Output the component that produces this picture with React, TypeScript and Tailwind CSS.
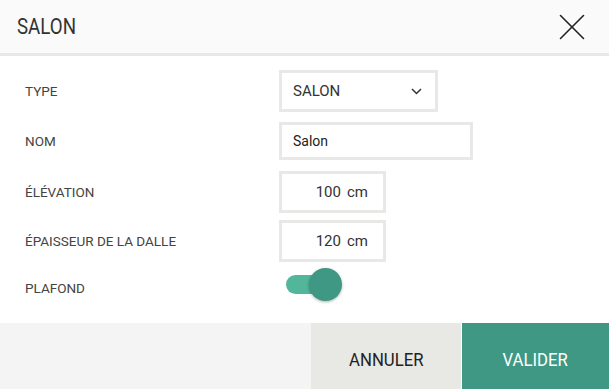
import { useState } from "react";

const font = { fontFamily: "Roboto, 'Noto Sans', sans-serif" };

function Label({ children }: { children: string }) {
  return <div className="w-[279px] shrink-0 pl-[25px] text-[13.5px] text-[#444]">{children}</div>;
}

export default function App() {
  const [plafond, setPlafond] = useState(true);

  return (
    <div className="flex h-[389px] w-[609px] flex-col overflow-hidden bg-white" style={font}>
      {/* Header */}
      <div className="flex h-[56px] items-center justify-between border-b-[3px] border-[#e8e8e8] bg-[#fafafa] pl-[17px] pr-[24px]">
        <span className="inline-block origin-left scale-x-[0.85] text-[22px] leading-none text-[#333]">SALON</span>
        <svg width="26" height="26" viewBox="0 0 26 26" fill="none" stroke="#222" strokeWidth="1.6" strokeLinecap="round">
          <line x1="1.5" y1="1.5" x2="24.5" y2="24.5" />
          <line x1="24.5" y1="1.5" x2="1.5" y2="24.5" />
        </svg>
      </div>

      {/* Form */}
      <div className="flex flex-1 flex-col pt-[14px]">
        <div className="flex h-[42px] items-center">
          <Label>TYPE</Label>
          <div className="flex h-[42px] w-[159px] items-center justify-between border-[3px] border-[#e8e8e6] bg-white pl-[11px] pr-[13px]">
            <span className="text-[15px] text-[#333]">SALON</span>
            <svg width="11" height="7" viewBox="0 0 11 7" fill="none" stroke="#333" strokeWidth="1.5">
              <polyline points="1,1 5.5,5.5 10,1" />
            </svg>
          </div>
        </div>

        <div className="mt-[10px] flex h-[38px] items-center">
          <Label>NOM</Label>
          <div className="flex h-[38px] w-[194px] items-center border-[3px] border-[#e8e8e6] bg-white pl-[11px]">
            <span className="text-[14px] text-[#222]">Salon</span>
          </div>
        </div>

        <div className="mt-[11px] flex h-[42px] items-center">
          <Label>ÉLÉVATION</Label>
          <div className="flex h-[42px] w-[107px] items-center justify-end gap-[6px] border-[3px] border-[#e8e8e6] bg-white pr-[15px] text-[15px] text-[#333]">
            <span>100</span>
            <span>cm</span>
          </div>
        </div>

        <div className="mt-[7px] flex h-[42px] items-center">
          <Label>ÉPAISSEUR DE LA DALLE</Label>
          <div className="flex h-[42px] w-[107px] items-center justify-end gap-[6px] border-[3px] border-[#e8e8e6] bg-white pr-[15px] text-[15px] text-[#333]">
            <span>120</span>
            <span>cm</span>
          </div>
        </div>

        <div className="mt-[6px] flex h-[33px] items-center">
          <div className="w-[279px] shrink-0 pl-[25px] pt-[8px] text-[13.5px] text-[#444]">PLAFOND</div>
          <button
            onClick={() => setPlafond((v) => !v)}
            className="relative ml-[7px] h-[33px] w-[56px]"
            aria-pressed={plafond}
          >
            <span className="absolute left-0 top-[7px] h-[19px] w-[44px] rounded-full bg-[#52b69b]" />
            <span
              className={`absolute top-0 h-[33px] w-[33px] rounded-full bg-[#3f9883] shadow-[0_1px_3px_rgba(0,0,0,0.3)] ${plafond ? "left-[23px]" : "left-0"}`}
            />
          </button>
        </div>
      </div>

      {/* Footer */}
      <div className="flex h-[66px] bg-[#f4f4f4]">
        <div className="flex-1" />
        <button className="flex w-[150px] items-center justify-center bg-[#e8e8e4] pt-[7px]">
          <span className="inline-block scale-x-[0.88] text-[19px] leading-none text-[#222]">ANNULER</span>
        </button>
        <div className="w-px bg-white" />
        <button className="flex w-[147px] items-center justify-center bg-[#3f9883] pt-[7px]">
          <span className="inline-block scale-x-[0.88] text-[19px] leading-none text-white">VALIDER</span>
        </button>
      </div>
    </div>
  );
}
